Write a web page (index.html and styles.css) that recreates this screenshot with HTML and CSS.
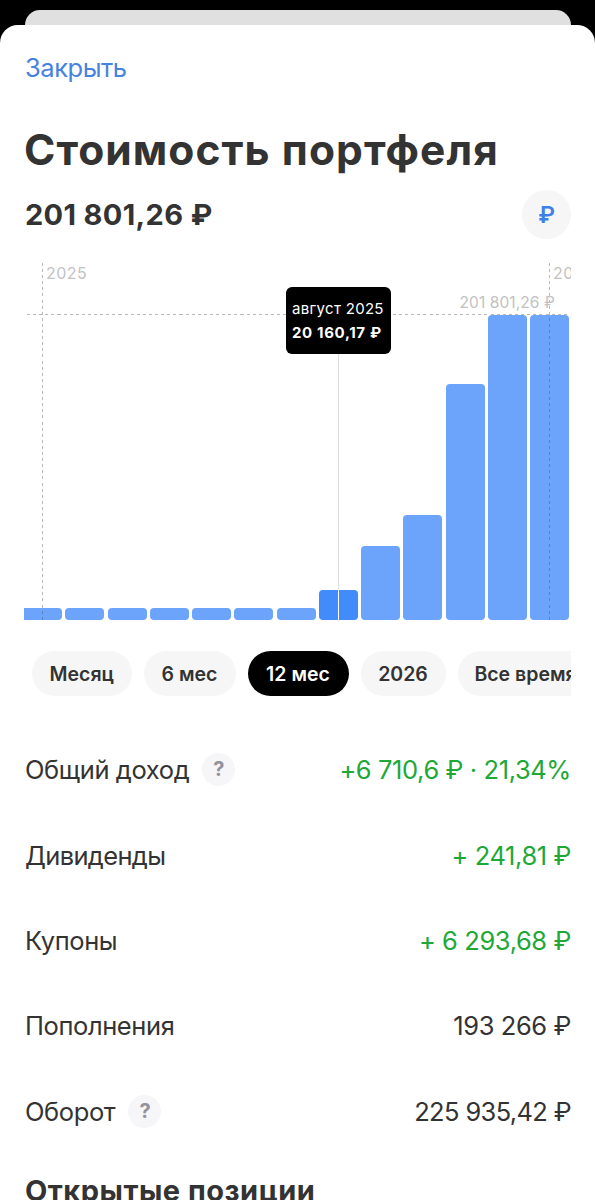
FILE: index.html
```html
<!DOCTYPE html>
<html lang="ru">
<head>
    <meta charset="UTF-8">
    <meta name="viewport" content="width=device-width, initial-scale=1.0">
    <title>Стоимость портфеля</title>
    <link rel="stylesheet" href="styles.css">
</head>
<body>
    <div class="back-sheet"></div>
    <div class="sheet">
        <a class="close">Закрыть</a>
        <h1>Стоимость портфеля</h1>
        <div class="total">
            <span class="amount">201 801,26 ₽</span>
            <button class="currency">₽</button>
        </div>

        <div class="chart">
            <div class="bars" id="bars"></div>
            <div class="max-line"></div>
            <div class="year-line first"><span>2025</span></div>
            <div class="year-line second"><span>2026</span></div>
            <div class="max-label">201 801,26 ₽</div>
            <div class="cursor"></div>
            <div class="tooltip">
                <span class="month">август 2025</span>
                <b class="value">20 160,17 ₽</b>
            </div>
        </div>

        <div class="periods">
            <button class="p-month">Месяц</button>
            <button class="p-half">6 мес</button>
            <button class="p-year active">12 мес</button>
            <button class="p-current">2026</button>
            <button class="p-all">Все время</button>
        </div>

        <div class="rows">
            <div class="row">
                <span class="name">Общий доход</span>
                <span class="help">?</span>
                <span class="sum plus">+6 710,6 ₽ · 21,34%</span>
            </div>
            <div class="row">
                <span class="name tight">Дивиденды</span>
                <span class="sum plus">+ 241,81 ₽</span>
            </div>
            <div class="row">
                <span class="name">Купоны</span>
                <span class="sum plus">+ 6 293,68 ₽</span>
            </div>
            <div class="row">
                <span class="name">Пополнения</span>
                <span class="sum">193 266 ₽</span>
            </div>
            <div class="row">
                <span class="name">Оборот</span>
                <span class="help">?</span>
                <span class="sum tight">225 935,42 ₽</span>
            </div>
        </div>

        <h2>Открытые позиции</h2>
    </div>

    <script>
        // bar heights in px, one per month
        const heights = [12, 12, 12, 12, 12, 12, 12, 30.5, 74, 105, 236, 305, 305];
        const selected = 7;

        document.getElementById("bars").innerHTML = heights.map((h, i) =>
            `<div class="bar${i === selected ? " selected" : ""}" style="height: ${h}px"></div>`
        ).join("");
    </script>
</body>
</html>
```

FILE: styles.css
```css
* {
    box-sizing: border-box;
}
body {
    margin: 0;
    height: 1200px;
    overflow: hidden;
    background: #000;
    color: #333;
    font-family: Inter, "Noto Sans", sans-serif;
    white-space: nowrap;
}
button {
    border: none;
    padding: 0;
    font-family: inherit;
    color: inherit;
}
.back-sheet {
    height: 15px;
    margin: 10px 24px 0 25px;
    background: #e0e0e0;
    border-radius: 15px 15px 0 0;
}
.sheet {
    height: 1175px;
    padding: 25px 24px 0 25px;
    background: #fff;
    border-radius: 18px 18px 0 0;
    overflow: hidden;
}
.close {
    display: block;
    height: 36px;
    line-height: 36px;
    font-size: 25.5px;
    letter-spacing: -.45px;
    color: #4682e0;
}
h1 {
    margin: 39px 0 0 -1px;
    height: 50px;
    line-height: 50px;
    font-size: 42.5px;
    font-weight: 700;
    letter-spacing: 1.05px;
}
.total {
    display: flex;
    align-items: center;
    justify-content: space-between;
    height: 49px;
    margin-top: 15px;
}
.amount {
    font-size: 29px;
    font-weight: 700;
    letter-spacing: .35px;
}
.currency {
    width: 49px;
    height: 49px;
    border-radius: 50%;
    background: #f6f6f6;
    color: #3f7fe8;
    font-size: 23px;
    font-weight: 600;
}

/* chart */
.chart {
    position: relative;
    height: 357px;
    margin-top: 24px;
    margin-left: -1px;
    overflow: hidden;
}
.bars {
    display: flex;
    align-items: flex-end;
    gap: 3.25px;
    height: 100%;
    margin-left: -1px;
}
.bar {
    flex: none;
    width: 39px;
    background: #6ca3fb;
    border-radius: 4px;
}
.bar:first-child {
    border-radius: 0 4px 4px 0;
}
.bar.selected {
    background: #428bfb;
}
.max-line {
    position: absolute;
    left: 3px;
    top: 51px;
    width: 540px;
    height: 1px;
    background: repeating-linear-gradient(90deg, #b9b9b9 0 3px, transparent 3px 6.1px);
}
.year-line {
    position: absolute;
    top: 0;
    width: 1px;
    height: 357px;
    background: repeating-linear-gradient(rgba(70, 70, 80, .38) 0 3px, transparent 3px 6.1px);
}
.year-line.first {
    left: 18px;
}
.year-line.second {
    left: 525px;
}
.year-line span {
    position: absolute;
    left: 4px;
    top: 0;
    line-height: 20px;
    font-size: 16px;
    letter-spacing: .5px;
    color: #c2c2c2;
}
.max-label {
    position: absolute;
    right: 16px;
    top: 30px;
    line-height: 20px;
    font-size: 15.5px;
    letter-spacing: .1px;
    color: #c2c2c2;
}
.cursor {
    position: absolute;
    left: 314px;
    top: 90px;
    width: 1px;
    height: 267px;
    background: linear-gradient(#dcdcdc 236px, #fff 236px);
}
.tooltip {
    position: absolute;
    left: 262px;
    top: 24px;
    width: 105px;
    height: 67px;
    padding: 10px 0 0 6px;
    border-radius: 6px;
    background: #000;
    color: #fff;
    font-size: 15px;
    line-height: 24px;
}
.tooltip span, .tooltip b {
    display: block;
}
.month {
    letter-spacing: .3px;
}
.value {
    font-weight: 700;
    letter-spacing: .65px;
}

/* period switch */
.periods {
    display: flex;
    gap: 12px;
    margin-top: 31px;
    padding-left: 7px;
    overflow: hidden;
}
.periods button {
    flex: none;
    height: 45px;
    border-radius: 23px;
    background: #f6f6f6;
    font-size: 19.5px;
    font-weight: 600;
}
.p-month {
    width: 99.5px;
}
.p-half {
    width: 92px;
}
.p-year {
    width: 101px;
}
.p-current {
    width: 85px;
}
.p-all {
    width: 136px;
}
.periods .active {
    background: #000;
    color: #fff;
}

/* totals */
.rows {
    margin-top: 31px;
}
.row {
    display: flex;
    align-items: center;
    height: 85.4px;
    font-size: 25.5px;
    letter-spacing: -.4px;
}
.help {
    width: 33px;
    height: 33px;
    margin-left: 13px;
    border-radius: 50%;
    background: #f6f6f8;
    color: #92929c;
    font-size: 20px;
    font-weight: 700;
    line-height: 33px;
    text-align: center;
}
.sum {
    margin-left: auto;
}
.plus {
    color: #20a836;
}
.tight {
    letter-spacing: -.65px;
}
h2 {
    margin: 17px 0 0;
    height: 40px;
    line-height: 40px;
    font-size: 29px;
    font-weight: 700;
    letter-spacing: .5px;
}
```
